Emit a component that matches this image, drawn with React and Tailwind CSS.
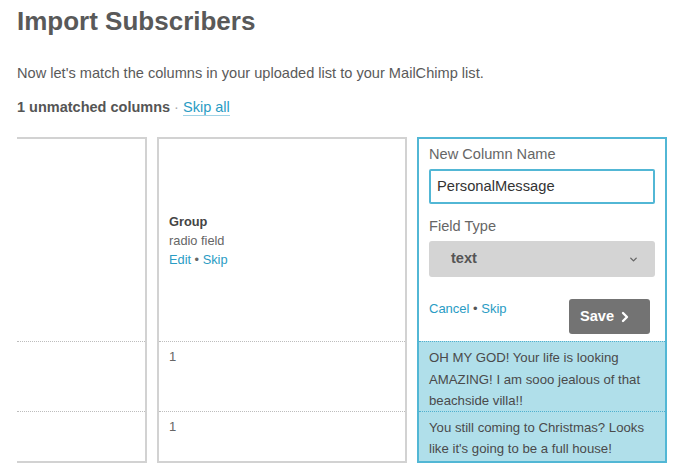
import React from "react";
import { ChevronDown, ChevronRight } from "lucide-react";

function GrayColumn({ width, header, rows, leftBorder }) {
  return (
    <div
      className={`flex flex-col shrink-0 ${width} border-t-2 border-b-2 border-r-2 border-[#d2d2d2] ${leftBorder ? "border-l-2" : ""}`}
    >
      <div className="h-[202px] flex flex-col justify-center px-[10px]">{header}</div>
      {rows.map((r, i) => (
        <div
          key={i}
          className={`border-t border-dotted border-[#bdbdbd] px-[10px] pt-[6px] text-[13px] leading-[18px] text-[#666] ${i === 0 ? "h-[70px]" : "h-[50px]"}`}
        >
          {r}
        </div>
      ))}
    </div>
  );
}

export default function App() {
  return (
    <div
      className="w-[677px] h-[468px] overflow-hidden bg-white pl-[17px] pt-[6px]"
      style={{ fontFamily: '"Liberation Sans", Arial, sans-serif' }}
    >
      <h1 className="text-[26px] leading-[30px] font-bold text-[#595959]">Import Subscribers</h1>
      <p className="mt-[27px] text-[14.6px] leading-[20px] text-[#5a5a5a]">
        Now let's match the columns in your uploaded list to your MailChimp list.
      </p>
      <div className="mt-[14px] text-[14.5px] leading-[20px] text-[#555]">
        <span className="font-bold">1 unmatched columns</span>
        <span className="text-[#aaa]"> · </span>
        <span className="text-[#2a9cc4] border-b border-[#9fd3e6]">Skip all</span>
      </div>

      <div className="mt-[20px] flex gap-[10px]">
        <GrayColumn width="w-[130px]" header={null} rows={["", ""]} />
        <GrayColumn
          width="w-[250px]"
          leftBorder
          header={
            <div className="text-[12.8px] leading-[19px]">
              <div className="font-bold text-[#444]">Group</div>
              <div className="text-[#666]">radio field</div>
              <div className="text-[#2a9cc4]">
                Edit <span className="text-[#666]">•</span> Skip
              </div>
            </div>
          }
          rows={["1", "1"]}
        />

        <div className="flex flex-col shrink-0 w-[250px] border-2 border-[#52b7d5]">
          <div className="h-[202px] px-[10px] pt-[4px] pb-[7px]">
            <div className="h-[22px] leading-[22px] text-[14.6px] text-[#666] mb-[4px]">New Column Name</div>
            <div className="h-[35px] border-2 border-[#52b7d5] rounded-[2px] flex items-center pl-[6px] text-[14.7px] text-[#333]">
              PersonalMessage
            </div>
            <div className="mt-[11px] h-[22px] leading-[22px] text-[14.6px] text-[#666] mb-[4px]">Field Type</div>
            <div className="h-[36px] bg-[#d4d4d4] rounded-[3px] flex items-center justify-between pl-[22px] pr-[16px]">
              <span className="text-[14.6px] font-bold text-[#555]">text</span>
              <ChevronDown size={11} strokeWidth={3} className="text-[#666]" />
            </div>
            <div className="mt-[22px] flex items-start justify-between pr-[5px]">
              <div className="mt-[1px] text-[13px] leading-[18px] text-[#2a9cc4]">
                Cancel <span className="text-[#555]">•</span> Skip
              </div>
              <div className="w-[81px] h-[35px] bg-[#737373] rounded-[3px] flex items-center pl-[11px] text-white text-[14.6px] font-bold">
                Save
                <ChevronRight size={16} strokeWidth={3.5} className="ml-[3px]" />
              </div>
            </div>
          </div>
          <div className="h-[70px] border-t border-dotted border-[#4fb0cf] bg-[#b0dfea] px-[10px] pt-[5px] text-[13.2px] leading-[21.5px] text-[#4a4a4a]">
            OH MY GOD! Your life is looking AMAZING! I am sooo jealous of that beachside villa!!
          </div>
          <div className="h-[50px] border-t border-dotted border-[#4fb0cf] bg-[#b0dfea] px-[10px] pt-[5px] text-[13.2px] leading-[21px] text-[#4a4a4a]">
            You still coming to Christmas? Looks like it's going to be a full house!
          </div>
        </div>
      </div>
    </div>
  );
}
